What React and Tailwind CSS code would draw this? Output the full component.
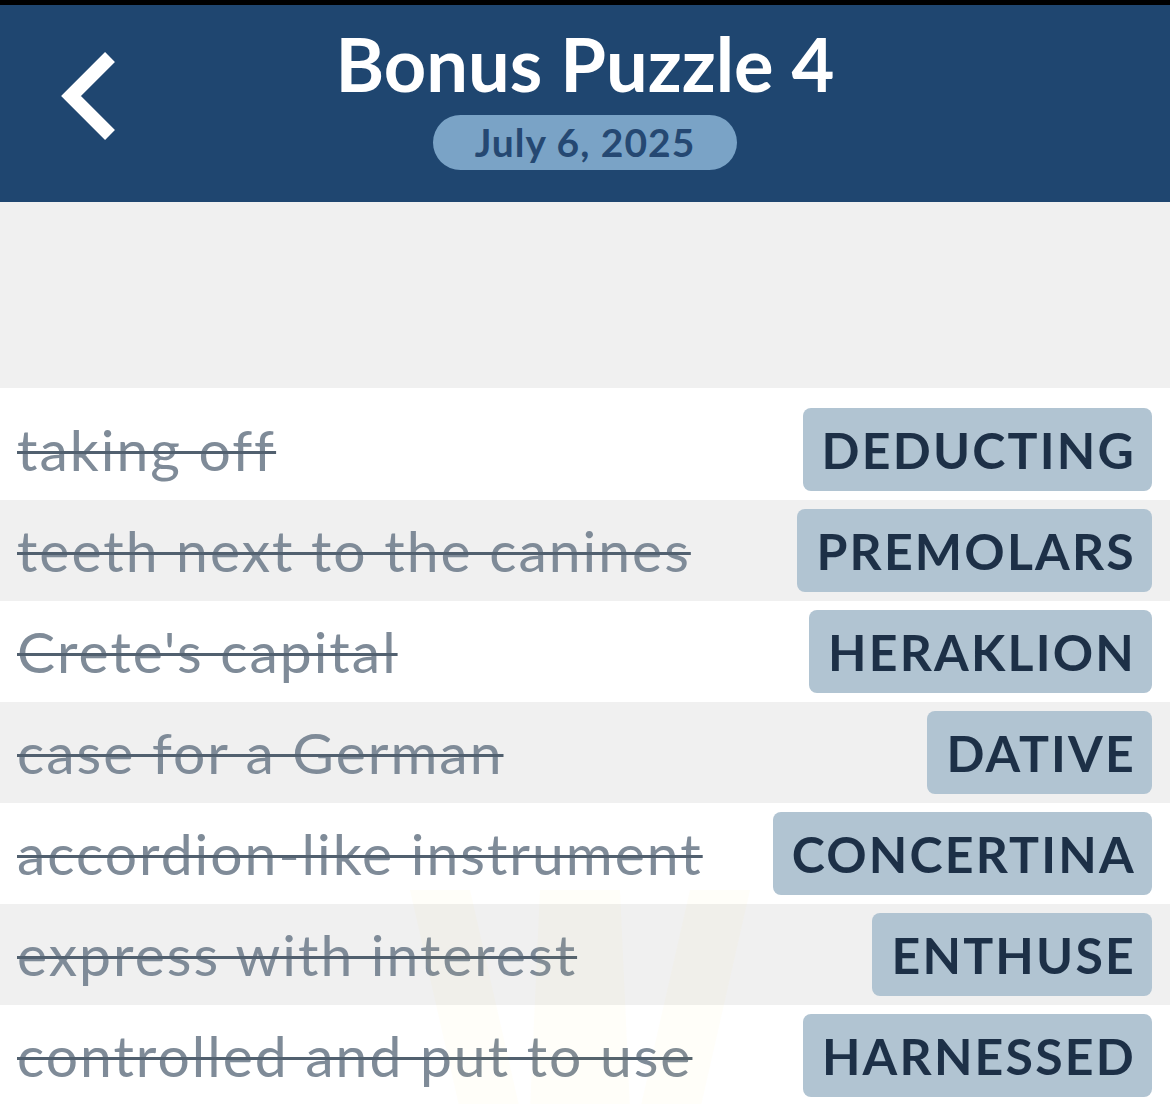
import React from 'react'

const clues = [
  { clue: 'taking off', answer: 'DEDUCTING' },
  { clue: 'teeth next to the canines', answer: 'PREMOLARS' },
  { clue: "Crete's capital", answer: 'HERAKLION' },
  { clue: 'case for a German', answer: 'DATIVE' },
  { clue: 'accordion-like instrument', answer: 'CONCERTINA' },
  { clue: 'express with interest', answer: 'ENTHUSE' },
  { clue: 'controlled and put to use', answer: 'HARNESSED' },
]

const BackChevron = () => (
  <svg width="70" height="100" viewBox="0 0 70 100" fill="none">
    <polyline points="53,9 14,48 53,87" stroke="white" strokeWidth="14" strokeLinejoin="miter" strokeLinecap="butt" />
  </svg>
)

// faint logo watermark behind the bottom rows
const Watermark = () => (
  <svg className="pointer-events-none absolute left-[370px] top-[870px]" width="420" height="240" viewBox="0 0 420 240">
    <path d="M40 20 L100 20 L150 240 L90 240 Z" fill="#ffd84a" opacity="0.03" />
    <path d="M170 20 L250 20 L260 240 L160 240 Z" fill="#ffd84a" opacity="0.03" />
    <path d="M320 20 L380 20 L330 240 L270 240 Z" fill="#ffd84a" opacity="0.03" />
  </svg>
)

export default function App() {
  return (
    <div className="relative min-h-[1104px] w-full overflow-hidden bg-white font-['Lato','Liberation_Sans',sans-serif]">
      <div className="h-[5px] bg-black" />
      <header className="relative flex h-[197px] flex-col items-center bg-[#1f4670]">
        <button className="absolute left-[57px] top-[43px]">
          <BackChevron />
        </button>
        <h1 className="mt-[22px] text-[74px] font-bold leading-none text-white">Bonus Puzzle 4</h1>
        <div className="mt-[14px] flex h-[55px] w-[304px] items-center justify-center rounded-full bg-[#7aa3c6]">
          <span className="text-[39px] font-bold leading-none tracking-[1px] text-[#254872]">July 6, 2025</span>
        </div>
      </header>

      <div className="h-[186px] bg-[#f0f0f0]" />

      <div className="bg-white pt-[11px]">
        {clues.map((c, i) => (
          <div
            key={c.answer}
            className={`flex h-[101px] items-center justify-between pl-[17px] pr-[18px] ${i % 2 === 1 ? 'bg-[#f0f0f0]' : 'bg-white'}`}
          >
            <span className="text-[57px] leading-none tracking-[2px] text-[#7f8b98] line-through decoration-[#51606f] decoration-[3px]">
              {c.clue}
            </span>
            <span className="flex h-[83px] items-center rounded-[8px] bg-[#b1c4d2] pl-[19px] pr-[16px] text-[50px] font-bold leading-none tracking-[2.2px] text-[#1d3047]">
              {c.answer}
            </span>
          </div>
        ))}
      </div>

      <Watermark />
    </div>
  )
}
